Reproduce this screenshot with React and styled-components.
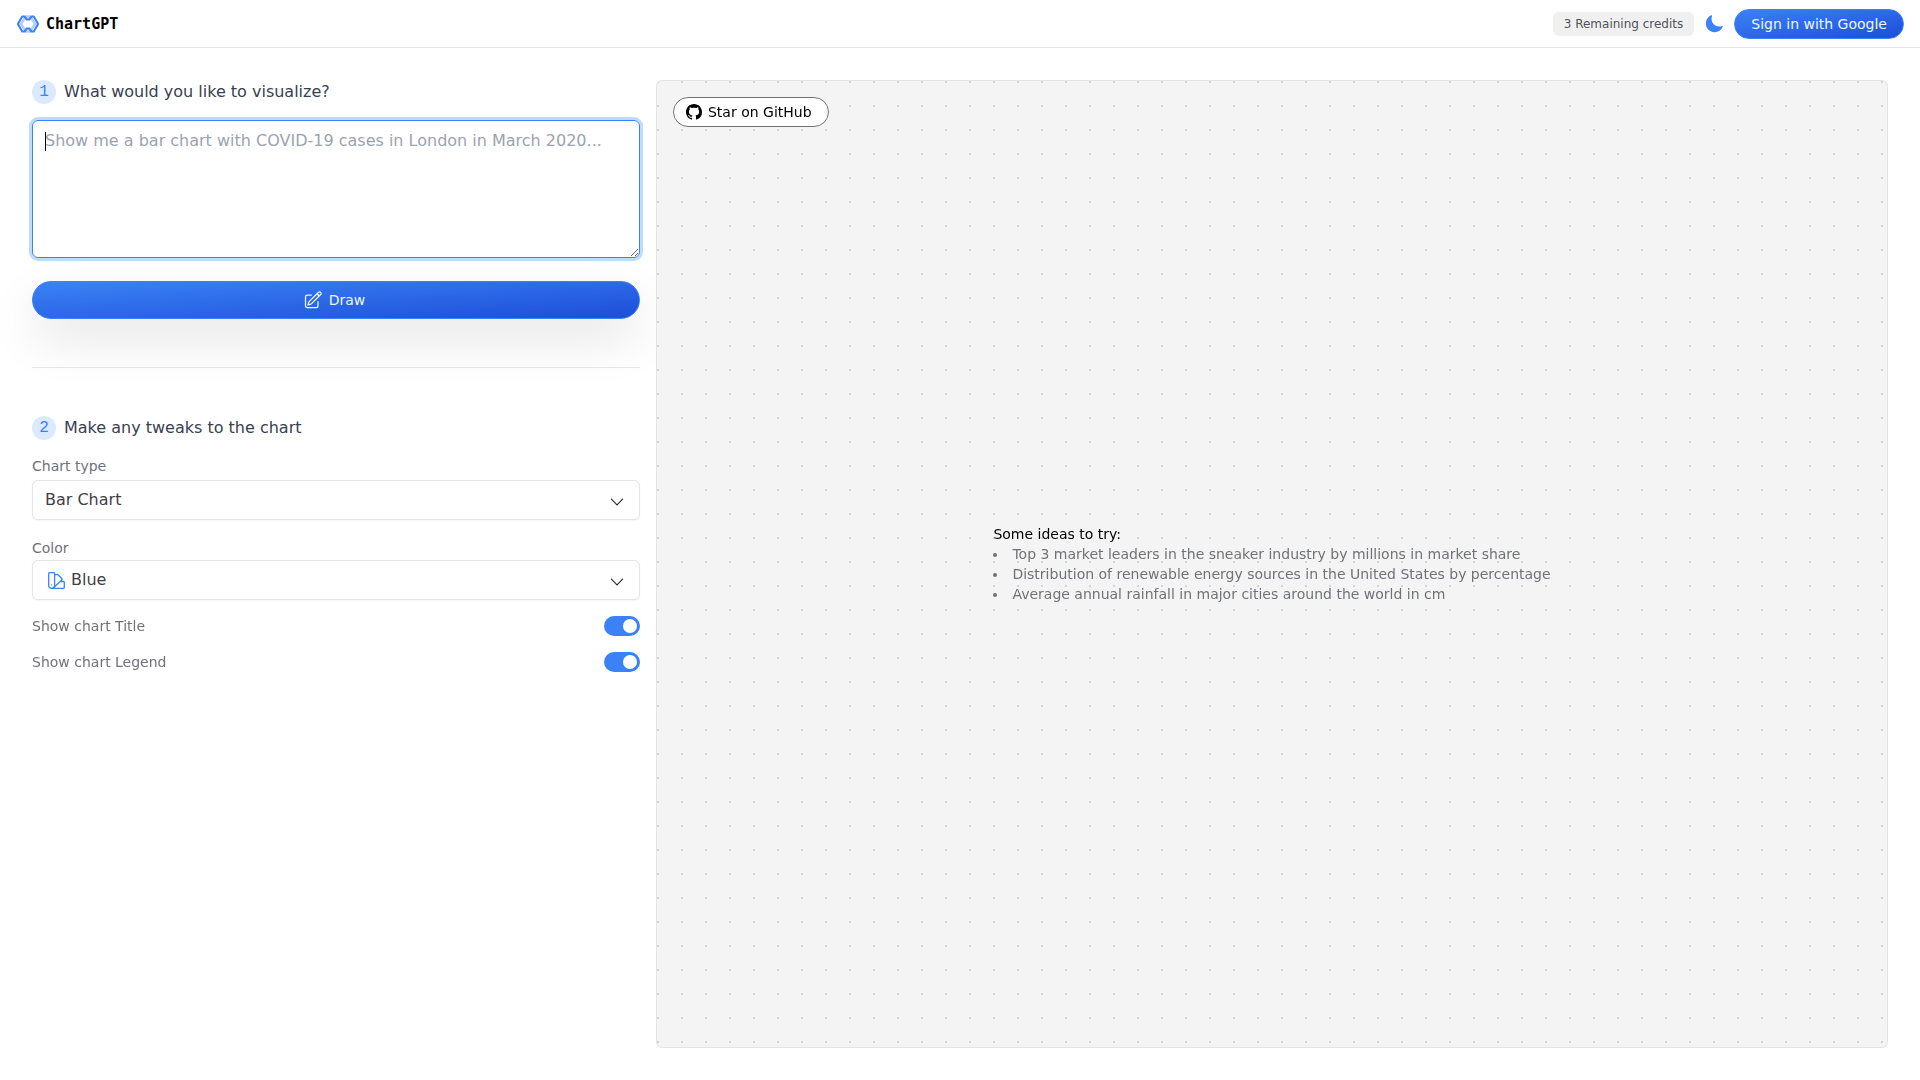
import { useState } from 'react';
import styled, { createGlobalStyle } from 'styled-components';
import { HiOutlinePencilSquare, HiOutlineChevronDown, HiMoon } from 'react-icons/hi2';

const GlobalStyle = createGlobalStyle`
*, *::before, *::after {
  box-sizing: border-box;
}
body {
  margin: 0;
  background: #fff;
  color: #000;
  font-family: "DejaVu Sans", sans-serif;
  font-size: 16px;
  line-height: 24px;
}
button, select, textarea {
  font: inherit;
}
`;

const Header = styled.header`
  display: flex;
  align-items: center;
  justify-content: space-between;
  height: 48px;
  padding: 1px 16px 0;
  border-bottom: 1px solid #e4e4e7;
`;

const Brand = styled.a`
  display: flex;
  align-items: center;
  gap: 6px;
  color: #000;
  font-family: "DejaVu Sans Mono", monospace;
  font-size: 15px;
  font-weight: 700;
  line-height: 26px;
  text-decoration: none;
`;

const HeaderActions = styled.div`
  display: flex;
  align-items: center;
  gap: 10px;
`;

const Credits = styled.span`
  padding: 4px 11px;
  border-radius: 6px;
  background: #f0f0f0;
  color: #52525b;
  font-size: 12px;
  line-height: 16px;
`;

const IconButton = styled.button`
  display: flex;
  padding: 0;
  border: none;
  background: transparent;
  color: #3b82f6;
  cursor: pointer;
`;

const PrimaryButton = styled.button`
  display: flex;
  align-items: center;
  justify-content: center;
  gap: 6px;
  width: ${({ $wide }) => ($wide ? '100%' : 'auto')};
  padding: ${({ $wide }) => ($wide ? '8px 20px 8px 16px' : '4px 16px')};
  border: 1px solid #3b82f6;
  border-radius: 9999px;
  background: linear-gradient(to bottom right, #3b82f6, #1d4ed8);
  box-shadow: ${({ $wide }) => ($wide ? '0 20px 50px rgba(0, 0, 0, 0.11)' : 'none')};
  color: #eff6ff;
  font-size: 14px;
  line-height: 20px;
  cursor: pointer;
`;

const Main = styled.main`
  display: flex;
  min-height: calc(100vh - 48px);
`;

const Sidebar = styled.aside`
  flex: 0 0 calc(100% / 3);
  padding: 32px 0 32px 32px;
`;

const StepTitle = styled.h2`
  display: flex;
  align-items: center;
  gap: 8px;
  margin: 0;
  color: #374151;
  font-size: 16px;
  font-weight: 400;
`;

const StepNumber = styled.span`
  display: grid;
  place-items: center;
  width: 24px;
  height: 24px;
  border-radius: 50%;
  background: #dbeafe;
  color: #3b82f6;
  font-family: "Liberation Mono", monospace;
`;

const Prompt = styled.textarea`
  display: block;
  width: 100%;
  height: 138px;
  margin: 16px 0 23px;
  padding: 8px 12px;
  border: 1px solid #3b82f6;
  border-radius: 6px;
  outline: none;
  box-shadow: 0 0 0 3px #bfdbfe;
  resize: vertical;
  &::placeholder {
    color: #9ca3af;
  }
  /* steady caret while the box is empty */
  &:placeholder-shown {
    background: linear-gradient(#000, #000) 12px 11px / 1px 19px no-repeat;
  }
`;

const Divider = styled.hr`
  height: 1px;
  margin: 48px 0;
  border: none;
  background: #e4e4e7;
`;

const Label = styled.label`
  display: block;
  color: ${({ $cool }) => ($cool ? '#6b7280' : '#71717a')};
  font-size: 14px;
  line-height: 20px;
`;

const Field = styled.div`
  display: flex;
  flex-direction: column;
  gap: ${({ $tight }) => ($tight ? 2 : 4)}px;
  margin-top: ${({ $tight }) => ($tight ? 18 : 16)}px;
`;

// one grid cell shared by the select and its icons
const SelectBox = styled.div`
  display: grid;
  align-items: center;
  color: #27272a;
  > * {
    grid-area: 1 / 1;
  }
  > svg {
    pointer-events: none;
    margin-left: 16px;
  }
  > svg:last-child {
    justify-self: end;
    margin: 3px 14px 0 0;
  }
`;

const Select = styled.select`
  appearance: none;
  width: 100%;
  height: 40px;
  padding: 0 40px 0 ${({ $icon }) => ($icon ? 38 : 12)}px;
  border: 1px solid #e4e4e7;
  border-radius: 6px;
  background: #fff;
  box-shadow: 0 1px 2px rgba(0, 0, 0, 0.05);
  color: #3f3f46;
`;

const ToggleRow = styled.div`
  display: flex;
  align-items: center;
  justify-content: space-between;
  margin-top: 16px;
`;

const Toggle = styled.input`
  appearance: none;
  display: flex;
  align-items: center;
  justify-content: ${({ checked }) => (checked ? 'flex-end' : 'flex-start')};
  width: 36px;
  height: 20px;
  margin: 0;
  padding: 0 3px;
  border-radius: 10px;
  background: ${({ checked }) => (checked ? '#3b82f6' : '#d4d4d8')};
  cursor: pointer;
  &::before {
    content: "";
    width: 14px;
    height: 14px;
    border-radius: 50%;
    background: #fff;
  }
`;

const CanvasArea = styled.section`
  display: flex;
  flex: 1;
  padding: 32px 32px 32px 16px;
`;

const Canvas = styled.div`
  display: grid;
  grid-template-rows: 30px 1fr 30px;
  flex: 1;
  padding: 16px;
  border: 1px solid #e4e4e7;
  border-radius: 6px;
  background: radial-gradient(circle at 1px 1px, #d4d4d8 1px, transparent 0) 0 0 / 24px 24px #f4f4f4;
`;

const GithubLink = styled.a`
  display: flex;
  align-items: center;
  justify-self: start;
  gap: 6px;
  padding: 0 16px 0 12px;
  border: 1px solid #71717a;
  border-radius: 9999px;
  background: #fff;
  color: #000;
  font-size: 14px;
  line-height: 20px;
  text-decoration: none;
`;

const Ideas = styled.div`
  place-self: center;
  font-size: 14px;
  line-height: 20px;
`;

const IdeaList = styled.ul`
  margin: 0;
  padding: 0;
  list-style: disc inside;
  color: #71717a;
`;

const ideas = [
  'Top 3 market leaders in the sneaker industry by millions in market share',
  'Distribution of renewable energy sources in the United States by percentage',
  'Average annual rainfall in major cities around the world in cm',
];

const Logo = () => (
  <svg width="24" height="24" viewBox="0 0 24 24" fill="none" stroke="#3b82f6" strokeLinejoin="round">
    <path strokeOpacity="0.4" strokeWidth="2.4" d="M8.5 6.500 5 12l3.500 5.500M15.500 6.500 19 12l-3.500 5.500M9 4.500h6M9 19.500h6" />
    <path strokeWidth="2.1" d="M1.900 12 6.200 4.500h2.300l2.300 3h2.400l2.300-3h2.300L22.100 12l-4.300 7.500h-2.300l-2.300-3h-2.400l-2.300 3H6.200z" />
  </svg>
);

const Swatch = () => (
  <svg width="17" height="17" viewBox="0 0 17 17" fill="none" stroke="#3b82f6" strokeWidth="1.3" strokeLinejoin="round">
    <path d="M.7 1.500a.8.8 0 0 1 .8-.8h4.300a.8.8 0 0 1 .8.8v11.900a2.950 2.950 0 0 1-5.900 0z" />
    <path d="M6.600 3.200 8.500 2.500q1-.300 1.800.500l3.500 3.500q.700.800 0 1.600L5.700 15.500" />
    <path d="M12.500 9.500h3a.8.8 0 0 1 .8.8v5.200a.8.8 0 0 1-.8.8H3.600" />
    <path d="M3.600 12.800h.1" strokeLinecap="round" />
  </svg>
);

const GithubMark = () => (
  <svg width="16" height="16" viewBox="0 0 16 16" fill="currentColor">
    <path d="M8 0C3.58 0 0 3.58 0 8c0 3.54 2.29 6.53 5.47 7.59.4.07.55-.17.55-.38 0-.19-.01-.82-.01-1.490-2.010.37-2.530-.490-2.690-.940-.090-.230-.480-.940-.820-1.130-.280-.150-.680-.520-.010-.530.630-.010 1.080.580 1.230.820.720 1.210 1.870.870 2.330.660.070-.520.280-.870.510-1.070-1.780-.200-3.640-.890-3.640-3.950 0-.870.310-1.590.820-2.150-.080-.200-.360-1.020.080-2.120 0 0 .670-.210 2.200.820.640-.180 1.320-.270 2-.270s1.360.090 2 .270c1.530-1.040 2.200-.820 2.200-.820.440 1.100.160 1.920.080 2.120.510.560.820 1.270.820 2.150 0 3.070-1.870 3.750-3.650 3.950.290.250.540.730.540 1.480 0 1.070-.010 1.930-.010 2.200 0 .210.150.460.550.380A8.010 8.010 0 0 0 16 8c0-4.420-3.580-8-8-8z" />
  </svg>
);

export default function App() {
  const [prompt, setPrompt] = useState('');
  const [showTitle, setShowTitle] = useState(true);
  const [showLegend, setShowLegend] = useState(true);

  return (
    <>
      <GlobalStyle />
      <Header>
        <Brand href="#">
          <Logo />
          ChartGPT
        </Brand>
        <HeaderActions>
          <Credits>3 Remaining credits</Credits>
          <IconButton type="button" aria-label="Toggle dark mode">
            <HiMoon size={20} />
          </IconButton>
          <PrimaryButton type="button">Sign in with Google</PrimaryButton>
        </HeaderActions>
      </Header>
      <Main>
        <Sidebar>
          <StepTitle>
            <StepNumber>1</StepNumber>
            <label htmlFor="prompt">What would you like to visualize?</label>
          </StepTitle>
          <Prompt
            id="prompt"
            autoFocus
            value={prompt}
            onChange={(e) => setPrompt(e.target.value)}
            placeholder="Show me a bar chart with COVID-19 cases in London in March 2020..."
          />
          <PrimaryButton type="button" $wide>
            <HiOutlinePencilSquare size={20} />
            Draw
          </PrimaryButton>
          <Divider />
          <StepTitle>
            <StepNumber>2</StepNumber>
            Make any tweaks to the chart
          </StepTitle>
          <Field>
            <Label htmlFor="type" $cool>Chart type</Label>
            <SelectBox>
              <Select id="type" defaultValue="Bar Chart">
                <option>Bar Chart</option>
                <option>Line Chart</option>
                <option>Pie Chart</option>
              </Select>
              <HiOutlineChevronDown size={18} />
            </SelectBox>
          </Field>
          <Field $tight>
            <Label htmlFor="color">Color</Label>
            <SelectBox>
              <Select id="color" defaultValue="Blue" $icon>
                <option>Blue</option>
                <option>Green</option>
                <option>Red</option>
              </Select>
              <Swatch />
              <HiOutlineChevronDown size={18} />
            </SelectBox>
          </Field>
          <ToggleRow>
            <Label htmlFor="title">Show chart Title</Label>
            <Toggle id="title" type="checkbox" checked={showTitle} onChange={() => setShowTitle(!showTitle)} />
          </ToggleRow>
          <ToggleRow>
            <Label htmlFor="legend">Show chart Legend</Label>
            <Toggle id="legend" type="checkbox" checked={showLegend} onChange={() => setShowLegend(!showLegend)} />
          </ToggleRow>
        </Sidebar>
        <CanvasArea>
          <Canvas>
            <GithubLink href="#">
              <GithubMark />
              Star on GitHub
            </GithubLink>
            <Ideas>
              Some ideas to try:
              <IdeaList>
                {ideas.map((idea) => (
                  <li key={idea}>{idea}</li>
                ))}
              </IdeaList>
            </Ideas>
          </Canvas>
        </CanvasArea>
      </Main>
    </>
  );
}
